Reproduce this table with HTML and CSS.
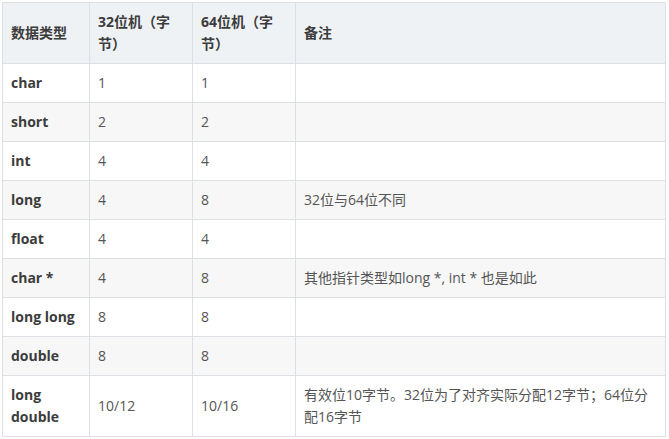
FILE: index.html
```html
<!DOCTYPE html>
<html lang="zh-CN">
<head>
<meta charset="utf-8">
<link rel="stylesheet" href="styles.css">
</head>
<body>
<table class="dt">
  <colgroup>
    <col class="c1"><col class="c2"><col class="c3"><col class="c4">
  </colgroup>
  <thead>
    <tr><th>数据类型</th><th>32位机（字节）</th><th>64位机（字节）</th><th>备注</th></tr>
  </thead>
  <tbody>
    <tr><td class="k">char</td><td>1</td><td>1</td><td></td></tr>
    <tr><td class="k">short</td><td>2</td><td>2</td><td></td></tr>
    <tr><td class="k">int</td><td>4</td><td>4</td><td></td></tr>
    <tr><td class="k">long</td><td>4</td><td>8</td><td>32位与64位不同</td></tr>
    <tr><td class="k">float</td><td>4</td><td>4</td><td></td></tr>
    <tr><td class="k">char *</td><td>4</td><td>8</td><td>其他指针类型如long *, int * 也是如此</td></tr>
    <tr><td class="k">long long</td><td>8</td><td>8</td><td></td></tr>
    <tr><td class="k">double</td><td>8</td><td>8</td><td></td></tr>
    <tr><td class="k">long double</td><td>10/12</td><td>10/16</td><td>有效位10字节。32位为了对齐实际分配12字节；64位分配16字节</td></tr>
  </tbody>
</table>
</body>
</html>
```
FILE: styles.css
```css
html, body {
  margin: 0;
  padding: 0;
  background: #ffffff;
}
body {
  padding: 2px 0 0 2px;
  font-family: "Open Sans", "Noto Sans CJK SC", sans-serif;
  font-size: 14px;
  color: #444;
}
.dt {
  border-collapse: collapse;
  table-layout: fixed;
  width: 663px;
}
.c1 { width: 87px; }
.c2 { width: 103px; }
.c3 { width: 103px; }
.c4 { width: 370px; }
.dt th, .dt td {
  border: 1px solid #dcdfe3;
  padding: 8px;
  line-height: 22px;
  text-align: left;
  vertical-align: middle;
}
.dt th {
  background: #eff2f5;
  font-weight: 700;
  color: #3c3c3c;
}
.dt td {
  font-weight: 400;
  color: #555;
}
.dt td.k {
  font-weight: 700;
  color: #3c3c3c;
}
.dt tbody tr:nth-child(even) td {
  background: #f7f7f7;
}
```
